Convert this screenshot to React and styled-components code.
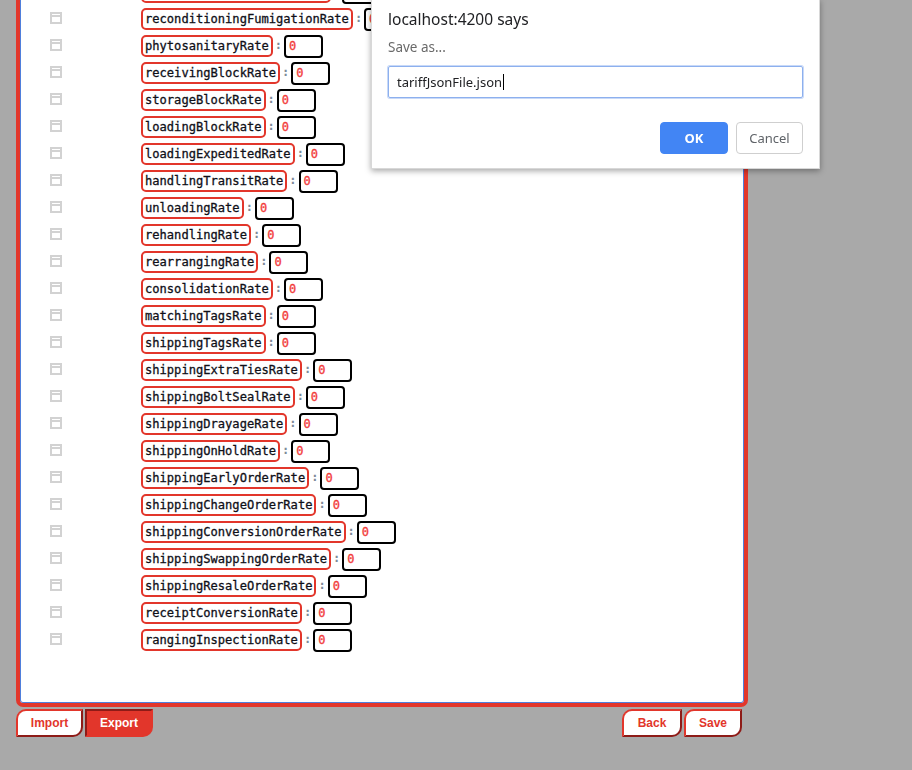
import React from 'react'
import styled, { createGlobalStyle } from 'styled-components'

const GlobalStyle = createGlobalStyle`
  html, body {
    margin: 0;
    padding: 0;
    background: #a9a9a9;
    overflow: hidden;
  }
  body {
    font-family: 'Liberation Sans', Arial, sans-serif;
  }
`

const RATES = [
  'reconditioningSortingRate',
  'reconditioningFumigationRate',
  'phytosanitaryRate',
  'receivingBlockRate',
  'storageBlockRate',
  'loadingBlockRate',
  'loadingExpeditedRate',
  'handlingTransitRate',
  'unloadingRate',
  'rehandlingRate',
  'rearrangingRate',
  'consolidationRate',
  'matchingTagsRate',
  'shippingTagsRate',
  'shippingExtraTiesRate',
  'shippingBoltSealRate',
  'shippingDrayageRate',
  'shippingOnHoldRate',
  'shippingEarlyOrderRate',
  'shippingChangeOrderRate',
  'shippingConversionOrderRate',
  'shippingSwappingOrderRate',
  'shippingResaleOrderRate',
  'receiptConversionRate',
  'rangingInspectionRate',
]

const Page = styled.div`
  width: 912px;
  height: 770px;
  padding-left: 16px;
  box-sizing: border-box;
`

const Panel = styled.div`
  width: 732px;
  margin-top: -25px;
  box-sizing: border-box;
  background: #fff;
  border: 4px solid #e2362b;
  border-radius: 0 0 7px 7px;
  box-shadow: inset 0 0 0 1px #4f7fdc;
  padding: 0 0 49px 1px;
`

const Row = styled.div`
  display: flex;
  align-items: flex-start;
  height: 27px;
`

const CheckCell = styled.div`
  width: 120px;
  flex: none;
  padding: 6px 0 0 29px;
  box-sizing: border-box;
`

const CheckIcon = styled.span`
  display: block;
  position: relative;
  width: 12px;
  height: 12px;
  box-sizing: border-box;
  border: 2px solid #d2d2d2;

  &::before {
    content: '';
    position: absolute;
    left: 0;
    right: 0;
    top: 1px;
    height: 2px;
    background: #d2d2d2;
  }
`

const Key = styled.span`
  margin-top: 2px;
  height: 22px;
  box-sizing: border-box;
  border: 2px solid #e2362b;
  border-radius: 5px;
  padding: 0 2px;
  font-family: 'DejaVu Sans Mono', 'Liberation Mono', monospace;
  font-size: 12.1px;
  line-height: 18px;
  color: #101018;
  -webkit-text-stroke: 0.3px #101018;
  white-space: nowrap;
`

const Colon = styled.span`
  margin: 4px 2px 0;
  font-family: 'DejaVu Sans Mono', monospace;
  font-size: 12px;
  font-weight: bold;
  line-height: 16px;
  color: #7d8a98;
`

const ValueBox = styled.span`
  margin-top: 2px;
  width: 39px;
  height: 23px;
  box-sizing: border-box;
  border: 2px solid #000;
  border-radius: 4px;
  padding: 0 3px;
  font-family: 'DejaVu Sans Mono', monospace;
  font-size: 12px;
  line-height: 19px;
  color: #f23a3a;
  -webkit-text-stroke: 0.3px #f23a3a;
`

const Footer = styled.div`
  width: 732px;
  display: flex;
  justify-content: space-between;
  margin-top: 2px;
`

const ButtonGroup = styled.div`
  display: flex;
  gap: 2px;
  margin-right: ${(p) => p.$right || 0}px;
`

const TabButton = styled.button`
  width: ${(p) => p.$w}px;
  height: 28px;
  box-sizing: border-box;
  padding: 0;
  font-family: 'Liberation Sans', Arial, sans-serif;
  font-weight: bold;
  font-size: 12px;
  cursor: pointer;
  color: ${(p) => (p.$active ? '#fff' : '#e2362b')};
  background: ${(p) => (p.$active ? '#e2362b' : '#fff')};
  border-width: 2px;
  border-style: solid;
  border-color: ${(p) =>
    p.$active
      ? '#8e1b17 #e2362b #e2362b #8e1b17'
      : '#e2362b #8e1b17 #8e1b17 #e2362b'};
  border-radius: ${(p) => (p.$active ? '0 0 10px 0' : '10px 0 10px 0')};
`

const Dialog = styled.div`
  position: fixed;
  top: -1px;
  left: 371px;
  width: 449px;
  height: 170px;
  box-sizing: border-box;
  background: #fff;
  border: 1px solid #d8d8d8;
  box-shadow: 0 2px 6px rgba(0, 0, 0, 0.35);
  padding: 9px 16px 0 16px;
  font-family: 'Noto Sans', 'Open Sans', sans-serif;
`

const Title = styled.div`
  font-size: 15.5px;
  color: #202124;
  line-height: 20px;
`

const Message = styled.div`
  margin-top: 8px;
  font-size: 13.5px;
  color: #6a6a6a;
  line-height: 20px;
`

const PromptInput = styled.div`
  margin-top: 9px;
  height: 32px;
  box-sizing: border-box;
  border: 1px solid #8db0ee;
  box-shadow: 0 0 0 1px #c8d9f8;
  border-radius: 2px;
  padding: 0 8px;
  display: flex;
  align-items: center;
  font-size: 13px;
  color: #202124;
`

const Caret = styled.span`
  display: inline-block;
  width: 1px;
  height: 16px;
  background: #000;
  margin-left: 1px;
`

const DialogActions = styled.div`
  display: flex;
  justify-content: flex-end;
  gap: 8px;
  margin-top: 24px;
`

const DialogButton = styled.button`
  width: ${(p) => p.$w}px;
  height: 32px;
  border-radius: 4px;
  font-family: 'Noto Sans', 'Open Sans', sans-serif;
  font-size: 13px;
  font-weight: ${(p) => (p.$primary ? 'bold' : 'normal')};
  color: ${(p) => (p.$primary ? '#fff' : '#5f6368')};
  background: ${(p) => (p.$primary ? '#4285f4' : '#fff')};
  border: 1px solid ${(p) => (p.$primary ? '#4285f4' : '#cfcfcf')};
  padding: 0;
`

export default function App() {
  return (
    <>
      <GlobalStyle />
      <Page>
        <Panel>
          {RATES.map((name) => (
            <Row key={name}>
              <CheckCell>
                <CheckIcon />
              </CheckCell>
              <Key>{name}</Key>
              <Colon>:</Colon>
              <ValueBox>0</ValueBox>
            </Row>
          ))}
        </Panel>
        <Footer>
          <ButtonGroup>
            <TabButton $w={67}>Import</TabButton>
            <TabButton $w={68} $active>Export</TabButton>
          </ButtonGroup>
          <ButtonGroup $right={6}>
            <TabButton $w={60}>Back</TabButton>
            <TabButton $w={58}>Save</TabButton>
          </ButtonGroup>
        </Footer>
      </Page>
      <Dialog>
        <Title>localhost:4200 says</Title>
        <Message>Save as...</Message>
        <PromptInput>
          tariffJsonFile.json
          <Caret />
        </PromptInput>
        <DialogActions>
          <DialogButton $w={68} $primary>OK</DialogButton>
          <DialogButton $w={67}>Cancel</DialogButton>
        </DialogActions>
      </Dialog>
    </>
  )
}
